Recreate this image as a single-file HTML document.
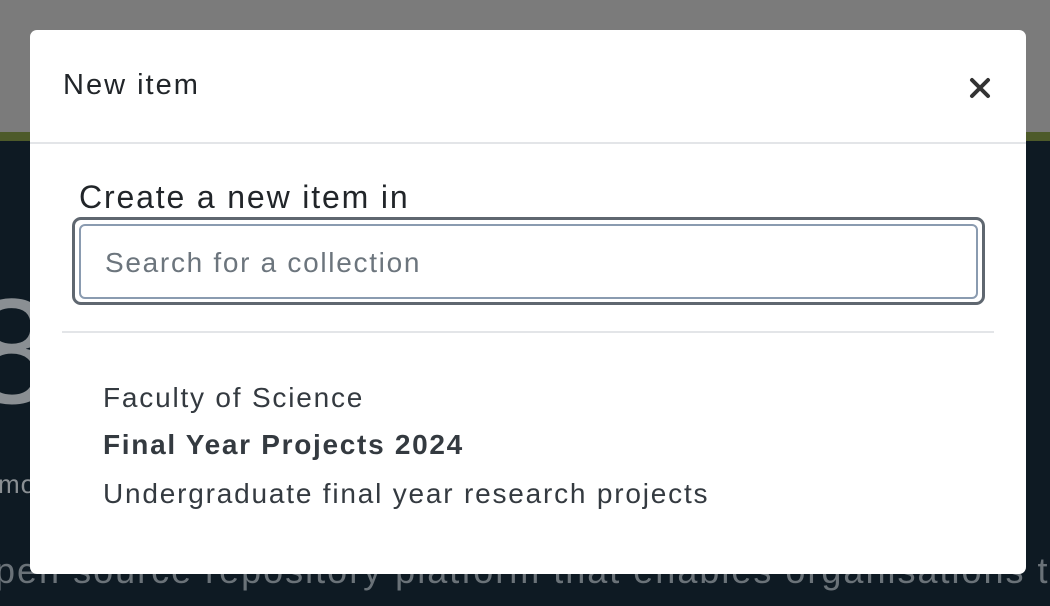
<!DOCTYPE html>
<html><head><style>
body{margin:0;width:1050px;height:606px;overflow:hidden;position:relative;font-family:"Liberation Sans",sans-serif;background:#0e1a23;}
.top{position:absolute;left:0;top:0;width:1050px;height:132px;background:#7b7b7b;}
.green{position:absolute;left:0;top:132px;width:1050px;height:9px;background:#4d5a2a;}
.bg8{position:absolute;left:-30px;top:265px;font-size:150px;color:#8a8f93;font-weight:300;}
.bgmo{position:absolute;left:-2px;top:469px;font-size:26px;color:#8a8f93;letter-spacing:1px;}
.bgt{position:absolute;left:-5px;top:550px;font-size:36px;color:#6a7278;white-space:nowrap;letter-spacing:2px;}
.modal{position:absolute;left:30px;top:30px;width:996px;height:544px;background:#fff;border-radius:7px;}
.title{position:absolute;left:33px;top:39px;font-size:29px;color:#212529;letter-spacing:2px;}
.x{position:absolute;left:938px;top:46px;}
.hr1{position:absolute;left:0;top:112px;width:996px;height:2px;background:#e3e5e8;}
.lbl{position:absolute;left:49px;top:149px;font-size:32px;color:#212529;letter-spacing:1.85px;}
.ring{position:absolute;left:42px;top:187px;width:907px;height:82px;border:3px solid #5f6770;border-radius:9px;}
.inp{position:absolute;left:49px;top:194px;width:895px;height:71px;border:2px solid #8a9bb0;border-radius:6px;}
.ph{position:absolute;left:75px;top:217px;font-size:28px;color:#6c757d;letter-spacing:1.7px;}
.hr2{position:absolute;left:32px;top:301px;width:932px;height:2px;background:#e3e5e8;}
.it{position:absolute;left:73px;font-size:28px;color:#343a40;white-space:nowrap;letter-spacing:1.8px;}
</style></head><body>
<div class="top"></div><div class="green"></div>
<div class="bg8">8</div><div class="bgmo">mo</div>
<div class="bgt">pen source repository platform that enables organisations to</div>
<div class="modal">
<div class="title">New item</div>
<svg class="x" width="24" height="24" viewBox="0 0 24 24"><path d="M4 4L20 20M20 4L4 20" stroke="#333" stroke-width="4" stroke-linecap="round"/></svg>
<div class="hr1"></div>
<div class="lbl">Create a new item in</div>
<div class="ring"></div><div class="inp"></div>
<div class="ph">Search for a collection</div>
<div class="hr2"></div>
<div class="it" style="top:352px">Faculty of Science</div>
<div class="it" style="top:399px;font-weight:bold;letter-spacing:1.7px">Final Year Projects 2024</div>
<div class="it" style="top:448px">Undergraduate final year research projects</div>
</div>
</body></html>
